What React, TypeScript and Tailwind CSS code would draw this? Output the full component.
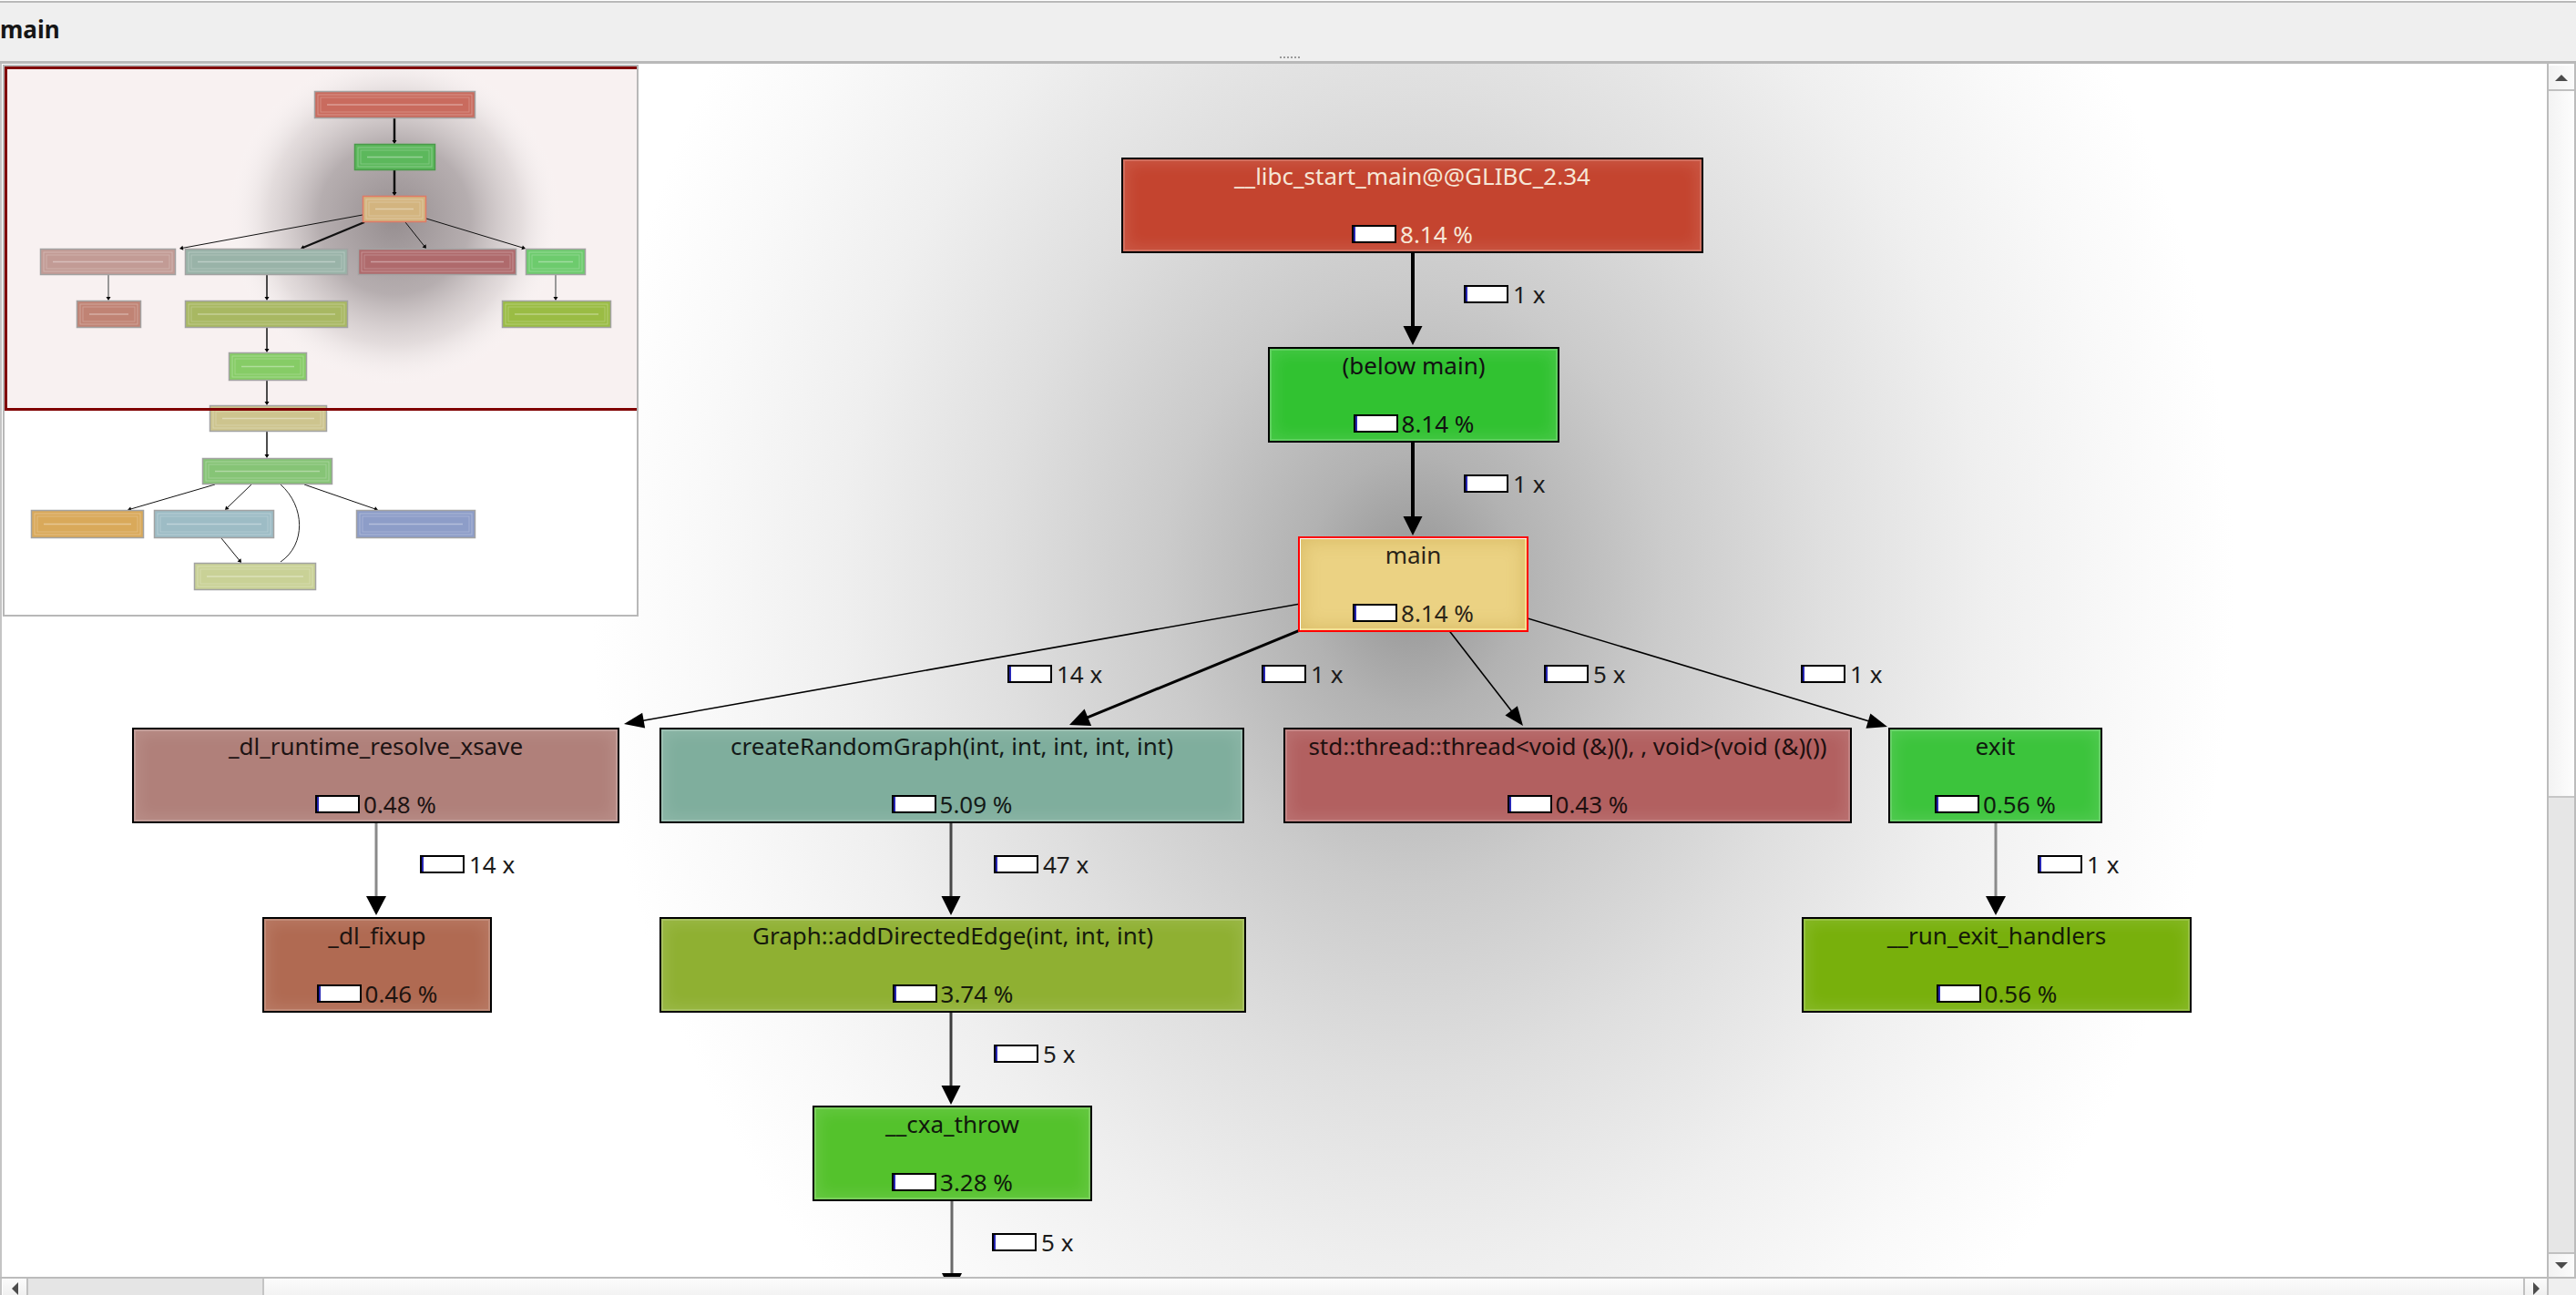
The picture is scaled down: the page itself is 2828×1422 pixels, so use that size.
import React from "react";

type Pt = { x1: number; y1: number; x2: number; y2: number };

function Arrow({
  x1,
  y1,
  x2,
  y2,
  w,
  color = "#000",
  hl = 20,
  hw = 10,
}: Pt & { w: number; color?: string; hl?: number; hw?: number }) {
  const dx = x2 - x1;
  const dy = y2 - y1;
  const len = Math.hypot(dx, dy);
  const ux = dx / len;
  const uy = dy / len;
  const bx = x2 - ux * hl;
  const by = y2 - uy * hl;
  const nx = -uy;
  const ny = ux;
  return (
    <g>
      <line x1={x1} y1={y1} x2={bx + ux * 2} y2={by + uy * 2} stroke={color} strokeWidth={w} />
      <polygon
        points={`${x2},${y2} ${bx + nx * hw},${by + ny * hw} ${bx - nx * hw},${by - ny * hw}`}
        fill="#000"
      />
    </g>
  );
}

function PctBox() {
  return (
    <span className="relative inline-block w-[49px] h-[20px] shrink-0 border-2 border-black bg-white">
      <span className="absolute left-0 top-0 bottom-0 w-[2px] bg-[#2626b4]" />
    </span>
  );
}

function CallNode({
  name,
  pct,
  className,
  selected,
}: {
  name: string;
  pct: string;
  className: string;
  selected?: boolean;
}) {
  const frame = selected
    ? "border-2 border-[#ff0000] shadow-[inset_1px_1px_0_#ffffff,inset_-2px_-2px_0_#f6df92,inset_0_0_18px_4px_rgba(180,140,40,0.28)]"
    : "border-2 border-black shadow-[inset_0_0_0_2px_rgba(255,255,255,0.16),inset_0_0_16px_6px_rgba(255,255,255,0.1)]";
  return (
    <div className={`absolute h-[105px] flex flex-col items-center ${frame} ${className}`}>
      <div className="mt-[3px] h-[30px] leading-[30px] whitespace-nowrap">{name}</div>
      <div className="mt-[39px] flex items-center h-[20px]">
        <PctBox />
        <span className="ml-[4px] leading-[20px] whitespace-nowrap">{pct}</span>
      </div>
    </div>
  );
}

function EdgeLabel({ text, className }: { text: string; className: string }) {
  return (
    <div className={`absolute flex items-center h-[20px] text-[#1b1b1b] ${className}`}>
      <PctBox />
      <span className="ml-[5px] leading-[20px] whitespace-nowrap">{text}</span>
    </div>
  );
}

function MiniNode({
  x1,
  x2,
  y1,
  y2,
  fill,
  stroke = "#a2a2a2",
}: Pt & { fill: string; stroke?: string }) {
  const w = x2 - x1;
  const h = y2 - y1;
  return (
    <g>
      <rect x={x1 + 0.5} y={y1 + 0.5} width={w - 1} height={h - 1} fill={fill} stroke={stroke} strokeWidth={1.5} />
      <rect x={x1 + 4} y={y1 + 4} width={w - 8} height={h - 8} fill="none" stroke="#ffffff" strokeOpacity={0.28} />
      <rect x={x1 + 7} y={y1 + 7} width={w - 14} height={h - 14} fill="none" stroke="#ffffff" strokeOpacity={0.22} />
      <line
        x1={x1 + 14}
        x2={x2 - 14}
        y1={y1 + h / 2}
        y2={y1 + h / 2}
        stroke="#ffffff"
        strokeOpacity={0.35}
        strokeWidth={1.5}
      />
    </g>
  );
}

function MiniArrow({ x1, y1, x2, y2, w = 1, color = "#111" }: Pt & { w?: number; color?: string }) {
  return <Arrow x1={x1} y1={y1} x2={x2} y2={y2} w={w} color={color} hl={4} hw={2.5} />;
}

function Minimap() {
  return (
    <div className="absolute left-[3px] top-[1px] w-[698px] h-[606px] border-2 border-[#b8b8b8] bg-white overflow-hidden">
      <svg width={694} height={602} viewBox="5 73 694 602" className="block">
        <defs>
          <radialGradient id="mshade" cx="433" cy="240" r="185" gradientUnits="userSpaceOnUse">
            <stop offset="0" stopColor="#958d8f" stopOpacity="1" />
            <stop offset="0.45" stopColor="#a59d9f" stopOpacity="0.8" />
            <stop offset="0.75" stopColor="#c4bdbe" stopOpacity="0.4" />
            <stop offset="1" stopColor="#ffffff" stopOpacity="0" />
          </radialGradient>
        </defs>
        <rect x={5} y={73} width={694} height={377} fill="rgb(180,100,100)" fillOpacity={0.09} />
        <circle cx={433} cy={240} r={185} fill="url(#mshade)" />

        <MiniArrow x1={433} y1={130} x2={433} y2={158} w={2.5} />
        <MiniArrow x1={433} y1={187} x2={433} y2={215} w={2.5} />
        <MiniArrow x1={398} y1={236} x2={197} y2={273} />
        <MiniArrow x1={400} y1={244} x2={330} y2={273} w={2.2} />
        <MiniArrow x1={445} y1={244} x2={468} y2={273} />
        <MiniArrow x1={468} y1={240} x2={577} y2={273} />
        <MiniArrow x1={119} y1={302} x2={119} y2={330} w={1.5} color="#7a7a7a" />
        <MiniArrow x1={293} y1={302} x2={293} y2={330} w={1.5} />
        <MiniArrow x1={610} y1={302} x2={610} y2={330} w={1.5} color="#7a7a7a" />
        <MiniArrow x1={293} y1={360} x2={293} y2={387} w={1.5} />
        <MiniArrow x1={293} y1={418} x2={293} y2={445} w={1.5} />
        <MiniArrow x1={293} y1={474} x2={293} y2={503} w={1.5} />
        <MiniArrow x1={236} y1={532} x2={140} y2={560} />
        <MiniArrow x1={276} y1={532} x2={247} y2={560} />
        <MiniArrow x1={334} y1={532} x2={415} y2={560} />
        <MiniArrow x1={243} y1={591} x2={265} y2={618} />
        <path d="M308 532 C 335 556, 336 598, 308 617" fill="none" stroke="#222" strokeWidth={1} />

        <MiniNode x1={345} x2={522} y1={100} y2={130} fill="#c96b5e" />
        <MiniNode x1={389} x2={478} y1={158} y2={187} fill="#5cb85c" stroke="#4a9a4a" />
        <MiniNode x1={398} x2={468} y1={215} y2={244} fill="#d3b47f" stroke="#e07a66" />
        <MiniNode x1={44} x2={193} y1={273} y2={302} fill="#c29b95" />
        <MiniNode x1={203} x2={382} y1={273} y2={302} fill="#99b3a8" />
        <MiniNode x1={393} x2={567} y1={273} y2={302} fill="#af6a6c" />
        <MiniNode x1={577} x2={643} y1={273} y2={302} fill="#6dcb6d" />
        <MiniNode x1={84} x2={155} y1={330} y2={360} fill="#c08374" />
        <MiniNode x1={203} x2={382} y1={330} y2={360} fill="#a8b862" />
        <MiniNode x1={551} x2={671} y1={330} y2={360} fill="#9abc44" />
        <MiniNode x1={251} x2={337} y1={387} y2={418} fill="#86cc66" />
        <MiniNode x1={230} x2={359} y1={445} y2={474} fill="#cdc48e" />
        <MiniNode x1={222} x2={365} y1={503} y2={532} fill="#86c476" />
        <MiniNode x1={34} x2={158} y1={560} y2={591} fill="#d9a95a" />
        <MiniNode x1={169} x2={301} y1={560} y2={591} fill="#9dbcc5" />
        <MiniNode x1={391} x2={522} y1={560} y2={591} fill="#8d9dc8" />
        <MiniNode x1={213} x2={347} y1={618} y2={648} fill="#c9d196" />

        <rect x={6.5} y={74.5} width={700} height={375} fill="none" stroke="#800000" strokeWidth={3} />
      </svg>
    </div>
  );
}

function Canvas() {
  return (
    <div className="relative w-[2796px] h-[1332px] shrink-0 overflow-hidden text-[26px] bg-[radial-gradient(ellipse_980px_1180px_at_1551px_570px,#939393_0%,#b2b2b2_12%,#cbcbcb_28%,#dfdfdf_46%,#efefef_64%,#f9f9f9_80%,#ffffff_92%)]">
      <svg
        width={2796}
        height={1332}
        viewBox="0 70 2796 1332"
        className="absolute left-0 top-0"
      >
        <Arrow x1={1551} y1={226} x2={1551} y2={379} w={4} hl={21} hw={10.5} />
        <Arrow x1={1551} y1={434} x2={1551} y2={588} w={4} hl={21} hw={10.5} />
        <Arrow x1={1551} y1={641} x2={685} y2={795} w={1.6} hl={22} hw={8.5} />
        <Arrow x1={1551} y1={641} x2={1174} y2={796} w={3} hl={22} hw={10} />
        <Arrow x1={1551} y1={641} x2={1672} y2={797} w={1.6} hl={21} hw={8.5} />
        <Arrow x1={1551} y1={641} x2={2072} y2={798} w={1.6} hl={22} hw={8.5} />
        <Arrow x1={413} y1={903} x2={413} y2={1005} w={3} color="#8a8a8a" hl={21} hw={11} />
        <Arrow x1={1044} y1={903} x2={1044} y2={1005} w={3} color="#474747" hl={21} hw={10.5} />
        <Arrow x1={2191} y1={903} x2={2191} y2={1005} w={3} color="#8a8a8a" hl={21} hw={11} />
        <Arrow x1={1044} y1={1111} x2={1044} y2={1213} w={3} color="#3c3c3c" hl={21} hw={10.5} />
        <Arrow x1={1045} y1={1319} x2={1045} y2={1420} w={3} color="#6a6a6a" hl={22} hw={11} />
      </svg>

      <CallNode
        name="__libc_start_main@@GLIBC_2.34"
        pct="8.14 %"
        className="left-[1231px] top-[103px] w-[639px] bg-[#c4442f] text-[#f6e6d6]"
      />
      <CallNode name="(below main)" pct="8.14 %" className="left-[1392px] top-[311px] w-[320px] bg-[#31c231] text-[#111]" />
      <CallNode name="main" pct="8.14 %" selected className="left-[1425px] top-[519px] w-[253px] bg-[#ebd283] text-[#2a2418]" />
      <CallNode
        name="_dl_runtime_resolve_xsave"
        pct="0.48 %"
        className="left-[145px] top-[729px] w-[535px] bg-[#b0807a] text-[#1e1414]"
      />
      <CallNode
        name="createRandomGraph(int, int, int, int, int)"
        pct="5.09 %"
        className="left-[724px] top-[729px] w-[642px] bg-[#7fae9d] text-[#141a18]"
      />
      <CallNode
        name="std::thread::thread<void (&)(), , void>(void (&)())"
        pct="0.43 %"
        className="left-[1409px] top-[729px] w-[624px] bg-[#b26060] text-[#1e1010]"
      />
      <CallNode name="exit" pct="0.56 %" className="left-[2073px] top-[729px] w-[235px] bg-[#3cc43c] text-[#0f1a0f]" />
      <CallNode name="_dl_fixup" pct="0.46 %" className="left-[288px] top-[937px] w-[252px] bg-[#b06a52] text-[#1e1410]" />
      <CallNode
        name="Graph::addDirectedEdge(int, int, int)"
        pct="3.74 %"
        className="left-[724px] top-[937px] w-[644px] bg-[#8fb032] text-[#161a0c]"
      />
      <CallNode
        name="__run_exit_handlers"
        pct="0.56 %"
        className="left-[1978px] top-[937px] w-[428px] bg-[#78b00c] text-[#141a08]"
      />
      <CallNode name="__cxa_throw" pct="3.28 %" className="left-[892px] top-[1144px] w-[307px] bg-[#54c22c] text-[#101a0c]" />

      <EdgeLabel text="1 x" className="left-[1607px] top-[243px]" />
      <EdgeLabel text="1 x" className="left-[1607px] top-[451px]" />
      <EdgeLabel text="14 x" className="left-[1106px] top-[660px]" />
      <EdgeLabel text="1 x" className="left-[1385px] top-[660px]" />
      <EdgeLabel text="5 x" className="left-[1695px] top-[660px]" />
      <EdgeLabel text="1 x" className="left-[1977px] top-[660px]" />
      <EdgeLabel text="14 x" className="left-[461px] top-[869px]" />
      <EdgeLabel text="47 x" className="left-[1091px] top-[869px]" />
      <EdgeLabel text="1 x" className="left-[2237px] top-[869px]" />
      <EdgeLabel text="5 x" className="left-[1091px] top-[1077px]" />
      <EdgeLabel text="5 x" className="left-[1089px] top-[1284px]" />

      <Minimap />

      {/* frame edge */}
      <div className="absolute left-0 top-0 bottom-0 w-[2px] bg-[#c4c4c4]" />
    </div>
  );
}

function VScroll() {
  return (
    <div className="w-[32px] h-[1332px] flex flex-col bg-[#efefef] border-l-2 border-r-2 border-[#bcbcbc]">
      <div className="h-[2px] bg-white" />
      <div className="h-[28px] flex items-center justify-center bg-gradient-to-r from-[#f2f2f2] to-[#fbfbfb] border-b-2 border-[#c0c0c0]">
        <svg width={14} height={7} viewBox="0 0 14 7">
          <polygon points="7,0 14,7 0,7" fill="#4c4c4c" />
        </svg>
      </div>
      <div className="h-[776px] bg-gradient-to-r from-[#f3f3f3] to-[#fdfdfd] border-b-2 border-[#c6c6c6]" />
      <div className="flex-1 bg-[#e6e6e6]" />
      <div className="h-[27px] flex items-center justify-center bg-gradient-to-r from-[#f2f2f2] to-[#fbfbfb] border-t-2 border-[#c0c0c0]">
        <svg width={14} height={7} viewBox="0 0 14 7">
          <polygon points="0,0 14,0 7,7" fill="#4c4c4c" />
        </svg>
      </div>
    </div>
  );
}

function HScroll() {
  return (
    <div className="h-[20px] shrink-0 flex overflow-hidden border-t-2 border-[#bcbcbc] bg-[#efefef]">
      <div className="w-[3px] border-l-2 border-[#c4c4c4] bg-white" />
      <div className="w-[28px] flex justify-center pt-[4px] bg-gradient-to-b from-[#fbfbfb] to-[#f0f0f0] border-r-2 border-[#c0c0c0]">
        <svg width={7} height={14} viewBox="0 0 7 14">
          <polygon points="0,7 7,0 7,14" fill="#4c4c4c" />
        </svg>
      </div>
      <div className="w-[257px] bg-[#e5e5e5]" />
      <div className="w-[2482px] bg-gradient-to-b from-[#fcfcfc] to-[#f3f3f3] border-l-2 border-[#c4c4c4]" />
      <div className="w-[26px] flex justify-center pt-[4px] bg-gradient-to-b from-[#fbfbfb] to-[#f0f0f0] border-l-2 border-[#c0c0c0]">
        <svg width={7} height={14} viewBox="0 0 7 14">
          <polygon points="7,7 0,0 0,14" fill="#4c4c4c" />
        </svg>
      </div>
      <div className="w-[32px] bg-[#efefef] border-l-2 border-[#c0c0c0]" />
    </div>
  );
}

export default function App() {
  return (
    <div className="w-[2828px] h-[1422px] overflow-hidden flex flex-col bg-white font-['Noto_Sans',sans-serif] text-[#1b1b1b]">
      {/* Title bar */}
      <div className="relative h-[70px] shrink-0 pt-[1px] bg-white">
        <div className="h-[69px] border-t-2 border-b-[3px] border-[#b9b9b9] bg-[#efefef] pt-[14px]">
          <div className="text-[26px] font-bold leading-[30px] text-[#161616]">main</div>
        </div>
        <div className="absolute left-[1405px] top-[62px] flex gap-[2px]">
          <span className="w-[2px] h-[2px] bg-[#9a9a9a]" />
          <span className="w-[2px] h-[2px] bg-[#9a9a9a]" />
          <span className="w-[2px] h-[2px] bg-[#9a9a9a]" />
          <span className="w-[2px] h-[2px] bg-[#9a9a9a]" />
          <span className="w-[2px] h-[2px] bg-[#9a9a9a]" />
          <span className="w-[2px] h-[2px] bg-[#9a9a9a]" />
        </div>
      </div>

      <div className="flex h-[1332px] shrink-0">
        <Canvas />
        <VScroll />
      </div>

      <HScroll />
    </div>
  );
}
